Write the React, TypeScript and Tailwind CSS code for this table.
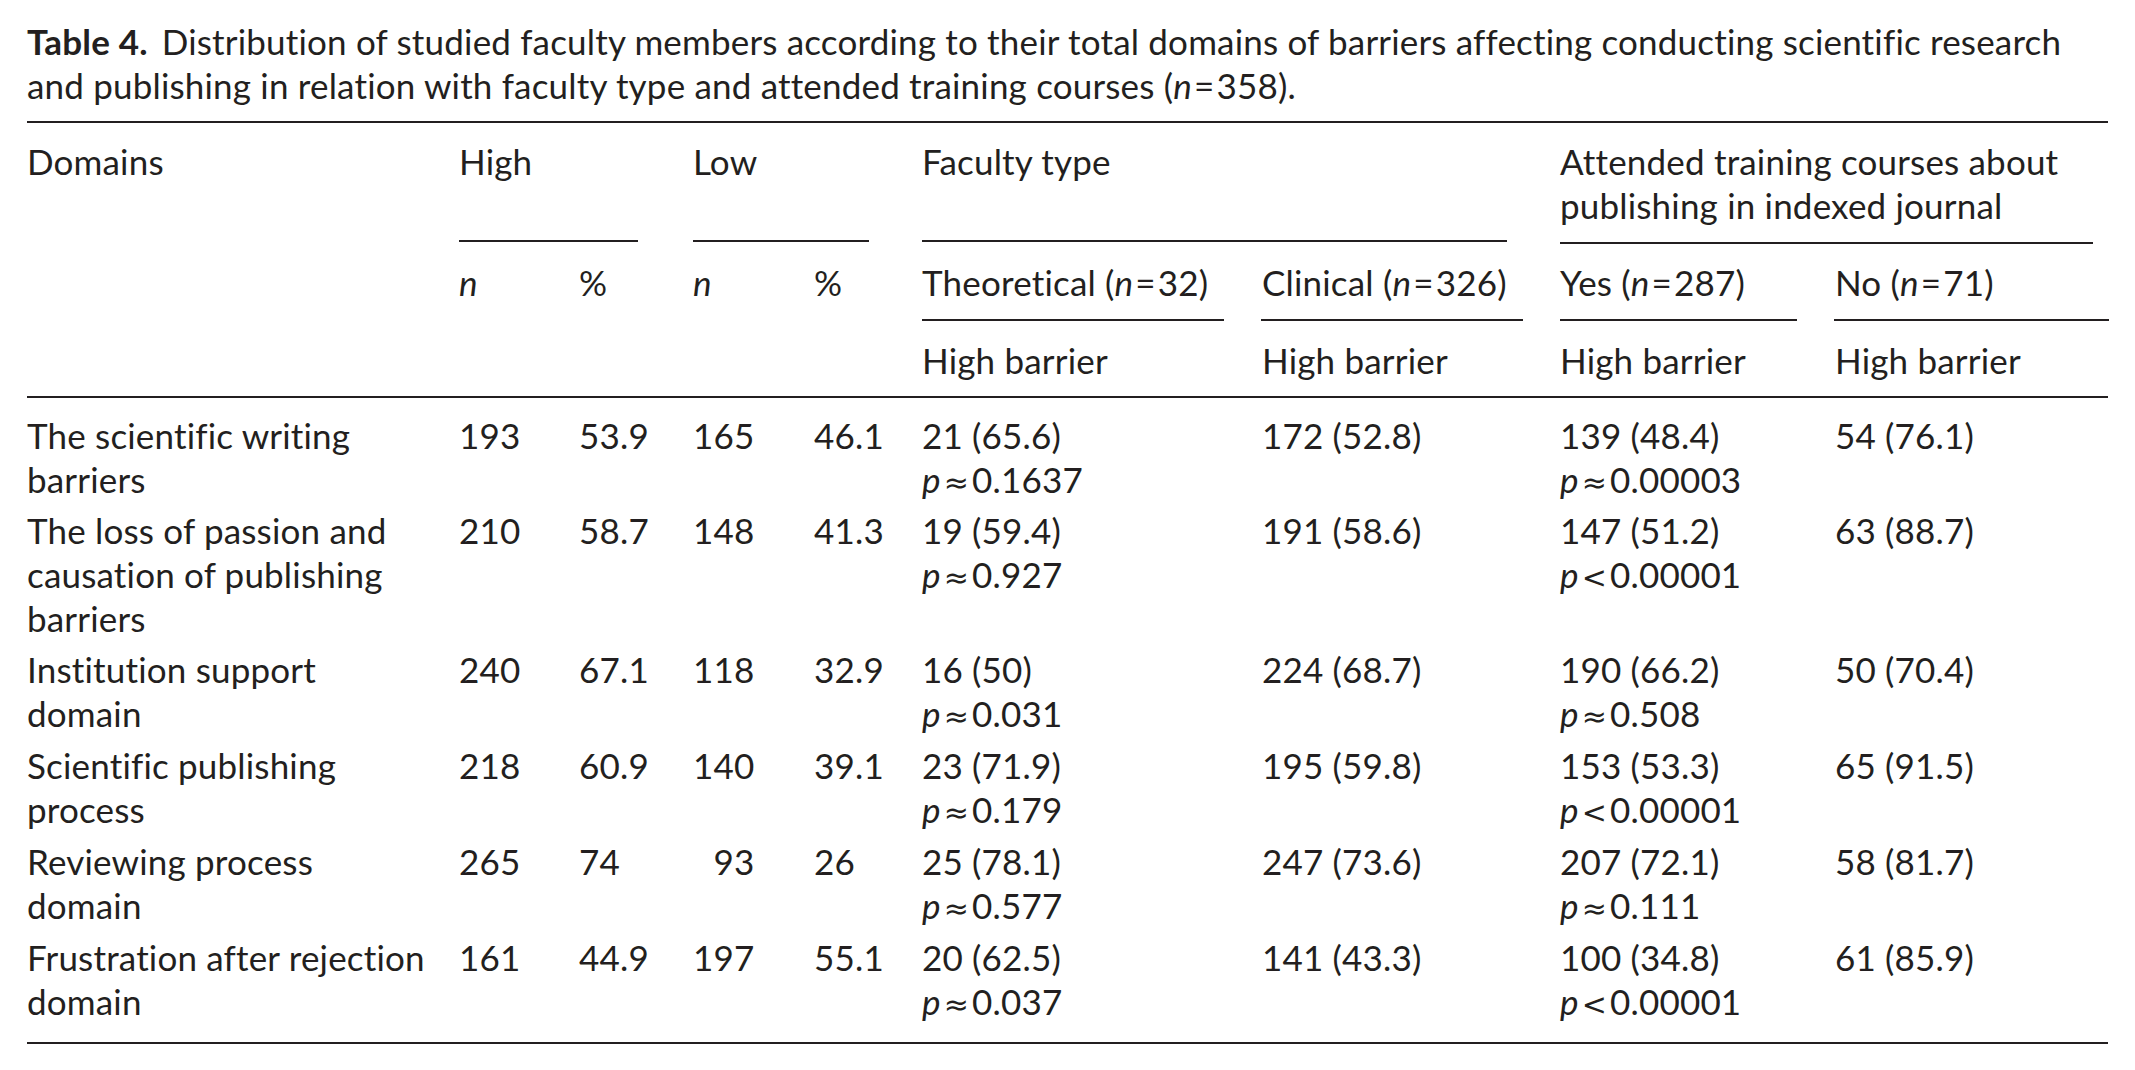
import { Fragment } from 'react';

type Row = {
  domain: string[];
  highN: string;
  highPct: string;
  lowN: string;
  lowPct: string;
  theo: string;
  theoP: [string, string];
  clin: string;
  yes: string;
  yesP: [string, string];
  no: string;
};

const rows: Row[] = [
  { domain: ['The scientific writing', 'barriers'], highN: '193', highPct: '53.9', lowN: '165', lowPct: '46.1', theo: '21 (65.6)', theoP: ['≈', '0.1637'], clin: '172 (52.8)', yes: '139 (48.4)', yesP: ['≈', '0.00003'], no: '54 (76.1)' },
  { domain: ['The loss of passion and', 'causation of publishing', 'barriers'], highN: '210', highPct: '58.7', lowN: '148', lowPct: '41.3', theo: '19 (59.4)', theoP: ['≈', '0.927'], clin: '191 (58.6)', yes: '147 (51.2)', yesP: ['<', '0.00001'], no: '63 (88.7)' },
  { domain: ['Institution support', 'domain'], highN: '240', highPct: '67.1', lowN: '118', lowPct: '32.9', theo: '16 (50)', theoP: ['≈', '0.031'], clin: '224 (68.7)', yes: '190 (66.2)', yesP: ['≈', '0.508'], no: '50 (70.4)' },
  { domain: ['Scientific publishing', 'process'], highN: '218', highPct: '60.9', lowN: '140', lowPct: '39.1', theo: '23 (71.9)', theoP: ['≈', '0.179'], clin: '195 (59.8)', yes: '153 (53.3)', yesP: ['<', '0.00001'], no: '65 (91.5)' },
  { domain: ['Reviewing process', 'domain'], highN: '265', highPct: '74', lowN: '\u200793', lowPct: '26', theo: '25 (78.1)', theoP: ['≈', '0.577'], clin: '247 (73.6)', yes: '207 (72.1)', yesP: ['≈', '0.111'], no: '58 (81.7)' },
  { domain: ['Frustration after rejection', 'domain'], highN: '161', highPct: '44.9', lowN: '197', lowPct: '55.1', theo: '20 (62.5)', theoP: ['≈', '0.037'], clin: '141 (43.3)', yes: '100 (34.8)', yesP: ['<', '0.00001'], no: '61 (85.9)' },
];

function Rule({ w }: { w: string }) {
  return <div className={`h-[2px] bg-[#231f20] ${w}`} />;
}

function N({ label, value }: { label: string; value: string }) {
  return (
    <span>
      {label} (<i>n</i>
      <span className="mx-[2px]">=</span>
      {value})
    </span>
  );
}

function P({ op, value }: { op: string; value: string }) {
  return (
    <div className="h-[44px]">
      <i>p</i>
      <span className="mx-[3px] font-['DejaVu_Sans',sans-serif] text-[30px] leading-[0]">{op}</span>
      {value}
    </div>
  );
}

export default function App() {
  return (
    <div className="min-h-screen bg-white text-[#231f20] font-['Lato','Liberation_Sans',sans-serif] text-[35px] leading-[44px] tracking-[0.18px]">
      <div className="pl-[27px] pt-[19px] w-[2108px]">
        <p className="whitespace-nowrap">
          <b>Table 4.</b>
          <span className="ml-[14px]">
            Distribution of studied faculty members according to their total domains of barriers affecting conducting scientific research
          </span>
          <br />
          and publishing in relation with faculty type and attended training courses (<i>n</i>
          <span className="mx-[2px]">=</span>358).
        </p>

        <div className="mt-[14px] h-[2px] bg-[#231f20]" />

        <div className="grid grid-cols-[432px_120px_114px_121px_108px_340px_298px_275px_273px]">
          {/* header row A */}
          <div className="pt-[16px]">Domains</div>
          <div className="pt-[16px] col-span-2">High</div>
          <div className="pt-[16px] col-span-2">Low</div>
          <div className="pt-[16px] col-span-2">Faculty type</div>
          <div className="pt-[16px] col-span-2">
            Attended training courses about
            <br />
            publishing in indexed journal
          </div>

          {/* header row B: group rules */}
          <div />
          <div className="col-span-2 pt-[13px]"><Rule w="w-[179px]" /></div>
          <div className="col-span-2 pt-[13px]"><Rule w="w-[176px]" /></div>
          <div className="col-span-2 pt-[13px]"><Rule w="w-[585px]" /></div>
          <div className="col-span-2 pt-[15px]"><Rule w="w-[533px]" /></div>

          {/* header row C */}
          <div className="pt-[16px]" />
          <div className="pt-[16px]"><i>n</i></div>
          <div className="pt-[16px]">%</div>
          <div className="pt-[16px]"><i>n</i></div>
          <div className="pt-[16px]">%</div>
          <div className="pt-[16px] whitespace-nowrap"><N label="Theoretical" value="32" /></div>
          <div className="pt-[16px] whitespace-nowrap"><N label="Clinical" value="326" /></div>
          <div className="pt-[16px] whitespace-nowrap"><N label="Yes" value="287" /></div>
          <div className="pt-[16px] whitespace-nowrap"><N label="No" value="71" /></div>

          {/* header row D: sub rules */}
          <div className="col-start-6 pt-[15px]"><Rule w="w-[302px]" /></div>
          <div className="pt-[15px] -ml-px"><Rule w="w-[262px]" /></div>
          <div className="pt-[15px]"><Rule w="w-[237px]" /></div>
          <div className="pt-[15px] -ml-px"><Rule w="w-[275px]" /></div>

          {/* header row E */}
          <div className="col-start-6 pt-[17px]">High barrier</div>
          <div className="pt-[17px]">High barrier</div>
          <div className="pt-[17px]">High barrier</div>
          <div className="pt-[17px]">High barrier</div>

          {/* header bottom rule */}
          <div className="col-span-9 pt-[14px] pb-[11px]"><Rule w="w-full" /></div>

          {rows.map((r) => {
            const pad = r.domain.length > 2 ? 'py-[3px]' : 'py-1';
            return (
              <Fragment key={r.domain.join(' ')}>
                <div className={`${pad} whitespace-nowrap`}>
                  {r.domain.map((line) => (
                    <div key={line}>{line}</div>
                  ))}
                </div>
                <div className={pad}>{r.highN}</div>
                <div className={pad}>{r.highPct}</div>
                <div className={`${pad} whitespace-pre`}>{r.lowN}</div>
                <div className={pad}>{r.lowPct}</div>
                <div className={`${pad} whitespace-nowrap`}>
                  <div>{r.theo}</div>
                  <P op={r.theoP[0]} value={r.theoP[1]} />
                </div>
                <div className={pad}>{r.clin}</div>
                <div className={`${pad} whitespace-nowrap`}>
                  <div>{r.yes}</div>
                  <P op={r.yesP[0]} value={r.yesP[1]} />
                </div>
                <div className={pad}>{r.no}</div>
              </Fragment>
            );
          })}

          <div className="col-span-9 pt-[15px]"><Rule w="w-full" /></div>
        </div>
      </div>
    </div>
  );
}
